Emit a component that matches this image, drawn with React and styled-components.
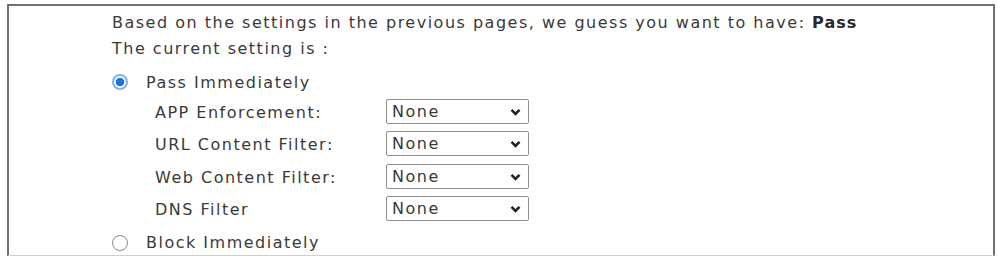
import React from 'react'
import styled, { createGlobalStyle } from 'styled-components'

const GlobalStyle = createGlobalStyle`
  body {
    margin: 0;
    background: #ffffff;
    font-family: "DejaVu Sans", Verdana, sans-serif;
  }
`;

const filters = [
  'APP Enforcement:',
  'URL Content Filter:',
  'Web Content Filter:',
  'DNS Filter',
];

const Chevron = () => (
  <svg width="11" height="8" viewBox="0 0 11 8">
    <path d="M1.5 1.8 L5.5 5.8 L9.5 1.8" fill="none" stroke="#222" strokeWidth="2.6" />
  </svg>
);

const App = () => {
  return (
    <>
      <GlobalStyle />
      <Frame>
        <Line>
          Based on the settings in the previous pages, we guess you want to have: <b>Pass</b>
        </Line>
        <Line>The current setting is :</Line>
        <Choice>
          <Radio type="radio" name="action" defaultChecked />
          <span>Pass Immediately</span>
        </Choice>
        <FilterGrid>
          {filters.map((f) => (
            <React.Fragment key={f}>
              <FilterLabel>{f}</FilterLabel>
              <SelectWrap>
                <Select defaultValue="none">
                  <option value="none">None</option>
                </Select>
                <Arrow><Chevron /></Arrow>
              </SelectWrap>
            </React.Fragment>
          ))}
        </FilterGrid>
        <Choice $last>
          <Radio type="radio" name="action" />
          <span>Block Immediately</span>
        </Choice>
      </Frame>
    </>
  )
}

export default App

const Frame = styled.div`
  margin: 4px 3px 0 7px;
  height: 252px;
  box-sizing: border-box;
  border: 2px solid #707070;
  border-bottom: 1px solid #d0d0d0;
  padding: 4px 0 0 103px;
  color: #3a3a3a;
  font-size: 16px;
  letter-spacing: 1.5px;
  display: flex;
  flex-direction: column;

  b {
    font-weight: bold;
    letter-spacing: 1px;
    color: #2a2a2a;
  }
`;

const Line = styled.div`
  height: 26px;
  line-height: 26px;
  white-space: nowrap;
`;

const Choice = styled.label`
  display: flex;
  align-items: center;
  gap: 18px;
  height: 26px;
  margin-top: ${(p) => (p.$last ? '9px' : '8px')};
`;

const Radio = styled.input`
  appearance: none;
  margin: 0;
  width: 16px;
  height: 16px;
  border-radius: 50%;
  border: 1.5px solid #8a8a8a;
  box-sizing: border-box;
  background: #fff;

  &:checked {
    border: 2px solid #7fb3f2;
    background: radial-gradient(circle, #1a73e8 0 4px, #fff 4.5px);
  }
`;

const FilterGrid = styled.div`
  display: grid;
  grid-template-columns: 231px 143px;
  row-gap: 7.5px;
  padding-left: 43px;
  margin-top: 4px;
`;

const FilterLabel = styled.div`
  height: 25px;
  box-sizing: border-box;
  padding-top: 3px;
  line-height: 22px;
  white-space: nowrap;
`;

const SelectWrap = styled.div`
  position: relative;
  height: 25px;
`;

const Select = styled.select`
  appearance: none;
  width: 100%;
  height: 25px;
  box-sizing: border-box;
  border: 1px solid #8f8f8f;
  border-radius: 2px;
  background: #fff;
  padding: 0 0 0 5px;
  font-family: "DejaVu Sans", Verdana, sans-serif;
  font-size: 16px;
  letter-spacing: 1.5px;
  color: #3a3a3a;
`;

const Arrow = styled.span`
  position: absolute;
  right: 8px;
  top: 9px;
  display: flex;
  pointer-events: none;
`;
